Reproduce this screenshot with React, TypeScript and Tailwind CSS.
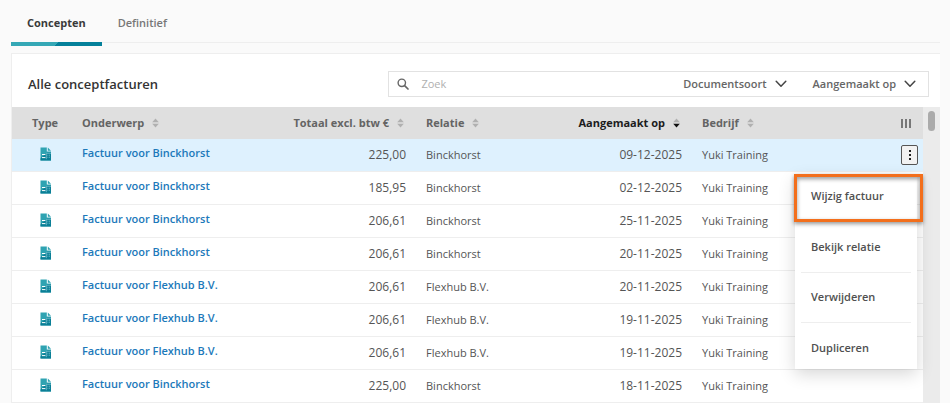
import React, { useState } from 'react';
import clsx from 'clsx';

type Invoice = {
  id: number;
  subject: string;
  total: string;
  relation: string;
  createdAt: string;
  company: string;
};

type SortDirection = 'none' | 'desc';

const invoices: Invoice[] = [
  { id: 1, subject: 'Factuur voor Binckhorst', total: '225,00', relation: 'Binckhorst', createdAt: '09-12-2025', company: 'Yuki Training' },
  { id: 2, subject: 'Factuur voor Binckhorst', total: '185,95', relation: 'Binckhorst', createdAt: '02-12-2025', company: 'Yuki Training' },
  { id: 3, subject: 'Factuur voor Binckhorst', total: '206,61', relation: 'Binckhorst', createdAt: '25-11-2025', company: 'Yuki Training' },
  { id: 4, subject: 'Factuur voor Binckhorst', total: '206,61', relation: 'Binckhorst', createdAt: '20-11-2025', company: 'Yuki Training' },
  { id: 5, subject: 'Factuur voor Flexhub B.V.', total: '206,61', relation: 'Flexhub B.V.', createdAt: '20-11-2025', company: 'Yuki Training' },
  { id: 6, subject: 'Factuur voor Flexhub B.V.', total: '206,61', relation: 'Flexhub B.V.', createdAt: '19-11-2025', company: 'Yuki Training' },
  { id: 7, subject: 'Factuur voor Flexhub B.V.', total: '206,61', relation: 'Flexhub B.V.', createdAt: '19-11-2025', company: 'Yuki Training' },
  { id: 8, subject: 'Factuur voor Binckhorst', total: '225,00', relation: 'Binckhorst', createdAt: '18-11-2025', company: 'Yuki Training' },
];

const SortIcon: React.FC<{ direction?: SortDirection }> = ({ direction = 'none' }) => (
  <svg className="h-2.5 w-[7px] shrink-0" viewBox="0 0 7 10" aria-hidden="true">
    <path d="M3.5 0.5 6.8 4.3H0.2Z" fill="#b0b0b0" />
    <path d="M3.5 9.5 0.2 5.7H6.8Z" fill={direction === 'desc' ? '#111111' : '#b0b0b0'} />
  </svg>
);

const InvoiceIcon: React.FC = () => (
  <svg className="h-3.5 w-3" viewBox="0 0 12 14" role="img" aria-label="Factuur">
    <path d="M0.5 0.5H6.8V4.6H11V13.5H0.5Z" fill="#2fa3b2" />
    <path d="M0.5 13.5V11.6L7 5.6H11V13.5Z" fill="#0a7f96" />
    <path d="M7.8 0.5 11 3.7H7.8Z" fill="#2fa3b2" />
    <path d="M2 7.5H5.4M2 10.6H5.4" stroke="#ffffff" strokeWidth="1" />
    <path d="M6.3 12.2V6.3H11" fill="none" stroke="#9fd6e0" strokeWidth="0.6" />
    <path d="M7.4 8.2H10M7.4 10.2H10" stroke="#8fd0dc" strokeWidth="0.7" strokeDasharray="1 0.6" />
  </svg>
);

const SearchIcon: React.FC = () => (
  <svg className="h-3 w-3 text-[#666666]" viewBox="0 0 12 12" fill="none" stroke="currentColor" aria-hidden="true">
    <circle cx="4.8" cy="4.8" r="3.7" strokeWidth="1.4" />
    <path d="M7.6 7.6 11 11" strokeWidth="1.7" strokeLinecap="round" />
  </svg>
);

const ChevronIcon: React.FC = () => (
  <svg className="h-2 w-3" viewBox="0 0 12 8" fill="none" stroke="#444444" strokeWidth="1.5" strokeLinecap="round" strokeLinejoin="round" aria-hidden="true">
    <path d="M1.2 1.3 6 6.3 10.8 1.3" />
  </svg>
);

const FilterButton: React.FC<{ label: string }> = ({ label }) => (
  <button type="button" className="flex items-center gap-2 whitespace-nowrap text-[#666666]">
    {label}
    <ChevronIcon />
  </button>
);

const Tabs: React.FC<{ active: string; onChange: (tab: string) => void }> = ({ active, onChange }) => (
  <div role="tablist" className="mr-2.5 ml-[11px] flex h-[46px] shrink-0">
    {['Concepten', 'Definitief'].map(tab => (
      <button
        key={tab}
        type="button"
        role="tab"
        aria-selected={active === tab}
        onClick={() => onChange(tab)}
        className={clsx('flex flex-col', active === tab ? 'font-bold text-[#3a3a3a]' : 'font-semibold text-[#777777]')}
      >
        <span className="flex h-[42px] items-center px-4 pt-1">{tab}</span>
        {active === tab ? (
          <span className="h-1 w-full bg-[linear-gradient(135deg,#35a8b6_50%,#04809a_50%)]" />
        ) : (
          <span className="h-px w-full bg-[#eeeeee]" />
        )}
      </button>
    ))}
    <span className="mt-[42px] h-px flex-1 bg-[#eeeeee]" />
  </div>
);

const menuItem = 'flex w-full items-center px-2.5 text-left font-semibold text-[#505050]';

const ActionMenu: React.FC = () => (
  <div role="menu" className="absolute top-9 right-[6px] z-10 w-[122px] bg-white px-1.5 shadow-[0_5px_16px_rgba(0,0,0,0.16)]">
    <button type="button" role="menuitem" className={clsx(menuItem, 'h-12 pb-1.5')}>Wijzig factuur</button>
    <button type="button" role="menuitem" className={clsx(menuItem, 'h-[50px] border-b border-[#eeeeee] pb-0.5')}>Bekijk relatie</button>
    <button type="button" role="menuitem" className={clsx(menuItem, 'h-[50px] border-b border-[#eeeeee] pb-0.5')}>Verwijderen</button>
    <button type="button" role="menuitem" className={clsx(menuItem, 'h-[46px] pt-1')}>Dupliceren</button>
    <span className="pointer-events-none absolute -top-px -right-[6px] -left-px h-12 border-[3px] border-[#f36f1c] shadow-[0_2px_4px_rgba(0,0,0,0.4),inset_0_2px_4px_rgba(0,0,0,0.4)]" />
  </div>
);

const App: React.FC = () => {
  const [activeTab, setActiveTab] = useState('Concepten');
  const [search, setSearch] = useState('');
  const [openMenu, setOpenMenu] = useState<number | null>(1);

  return (
    <div className="flex h-screen flex-col overflow-hidden bg-[#fafafa] font-['Open_Sans',sans-serif] text-[11px] leading-4 text-[#555555]">
      <Tabs active={activeTab} onChange={setActiveTab} />

      <main className="mt-[7px] mr-2.5 ml-[11px] flex min-h-0 flex-1 flex-col border-t border-l border-[#eeeeee] bg-white">
        <div className="flex h-[53px] shrink-0 items-center justify-between pt-1.5 pr-[11px] pl-4">
          <h1 className="text-[13px] font-semibold text-[#333333]">Alle conceptfacturen</h1>
          <div className="flex h-[26px] w-[60%] items-center border border-[#e2e2e2] pr-3">
            <label htmlFor="search" className="flex w-7 justify-center" aria-label="Zoek">
              <SearchIcon />
            </label>
            <input
              id="search"
              type="text"
              value={search}
              onChange={e => setSearch(e.target.value)}
              placeholder="Zoek"
              className="min-w-0 flex-1 pl-1 outline-none placeholder:text-[#b0b0b0]"
            />
            <div className="flex gap-[26px] font-semibold">
              <FilterButton label="Documentsoort" />
              <FilterButton label="Aangemaakt op" />
            </div>
          </div>
        </div>

        <div className="flex min-h-0 flex-1">
          <div className="min-w-0 flex-1">
            <table className="w-full table-fixed border-separate border-spacing-0 whitespace-nowrap">
              <colgroup>
                <col className="w-[60px]" />
                <col />
                <col className="w-[140px]" />
                <col className="w-[144px]" />
                <col className="w-[132px]" />
                <col className="w-[188px]" />
                <col className="w-[43px]" />
              </colgroup>
              <thead>
                <tr className="h-8 bg-[#dfdfdf] text-left text-[#646464]">
                  <th className="pl-5">Type</th>
                  <th className="px-2.5">
                    <span className="flex items-center gap-2">Onderwerp <SortIcon /></span>
                  </th>
                  <th className="pr-3 pl-2.5">
                    <span className="flex items-center justify-end gap-2">Totaal excl. btw € <SortIcon /></span>
                  </th>
                  <th className="px-2.5">
                    <span className="flex items-center gap-2">Relatie <SortIcon /></span>
                  </th>
                  <th className="pr-3 pl-2.5 text-[#1c1c1c]" aria-sort="descending">
                    <span className="flex items-center justify-end gap-2">Aangemaakt op <SortIcon direction="desc" /></span>
                  </th>
                  <th className="px-2.5">
                    <span className="flex items-center gap-2">Bedrijf <SortIcon /></span>
                  </th>
                  <th className="pr-3">
                    <button type="button" aria-label="Kolommen" className="ml-auto flex gap-0.5">
                      <span className="h-[9px] w-0.5 bg-[#777777]" />
                      <span className="h-[9px] w-0.5 bg-[#777777]" />
                      <span className="h-[9px] w-0.5 bg-[#777777]" />
                    </button>
                  </th>
                </tr>
              </thead>
              <tbody>
                {invoices.map(invoice => (
                  <tr
                    key={invoice.id}
                    className={clsx('h-[33px] [&>td]:border-b [&>td]:border-[#eeeeee]', invoice.id === 1 && 'bg-[#def1fe]')}
                  >
                    <td className="pb-0.5 pl-7">
                      <InvoiceIcon />
                    </td>
                    <td className="px-2.5 pb-1">
                      <a href="#" className="font-semibold text-[#1c79ba]">{invoice.subject}</a>
                    </td>
                    <td className="px-2.5 text-right text-xs">{invoice.total}</td>
                    <td className="px-2.5">{invoice.relation}</td>
                    <td className="px-2.5 text-right text-xs">{invoice.createdAt}</td>
                    <td className="px-2.5">{invoice.company}</td>
                    <td className="relative">
                      {invoice.id === 1 && (
                        <button
                          type="button"
                          aria-label="Acties"
                          onClick={() => setOpenMenu(openMenu === invoice.id ? null : invoice.id)}
                          className="mr-[5px] ml-auto flex h-5 w-[17px] flex-col items-center justify-center gap-0.5 rounded-xs border border-[#555555] bg-[#f2f2f2]"
                        >
                          <span className="size-0.5 bg-[#222222]" />
                          <span className="size-0.5 bg-[#222222]" />
                          <span className="size-0.5 bg-[#222222]" />
                        </button>
                      )}
                      {openMenu === invoice.id && <ActionMenu />}
                    </td>
                  </tr>
                ))}
              </tbody>
            </table>
          </div>
          <div className="w-[17px] shrink-0 bg-[#ebebeb] pt-1 pl-[5px]">
            <div className="h-5 w-[7px] rounded-full bg-[#ababab]" />
          </div>
        </div>
      </main>
    </div>
  );
};

export default App;
